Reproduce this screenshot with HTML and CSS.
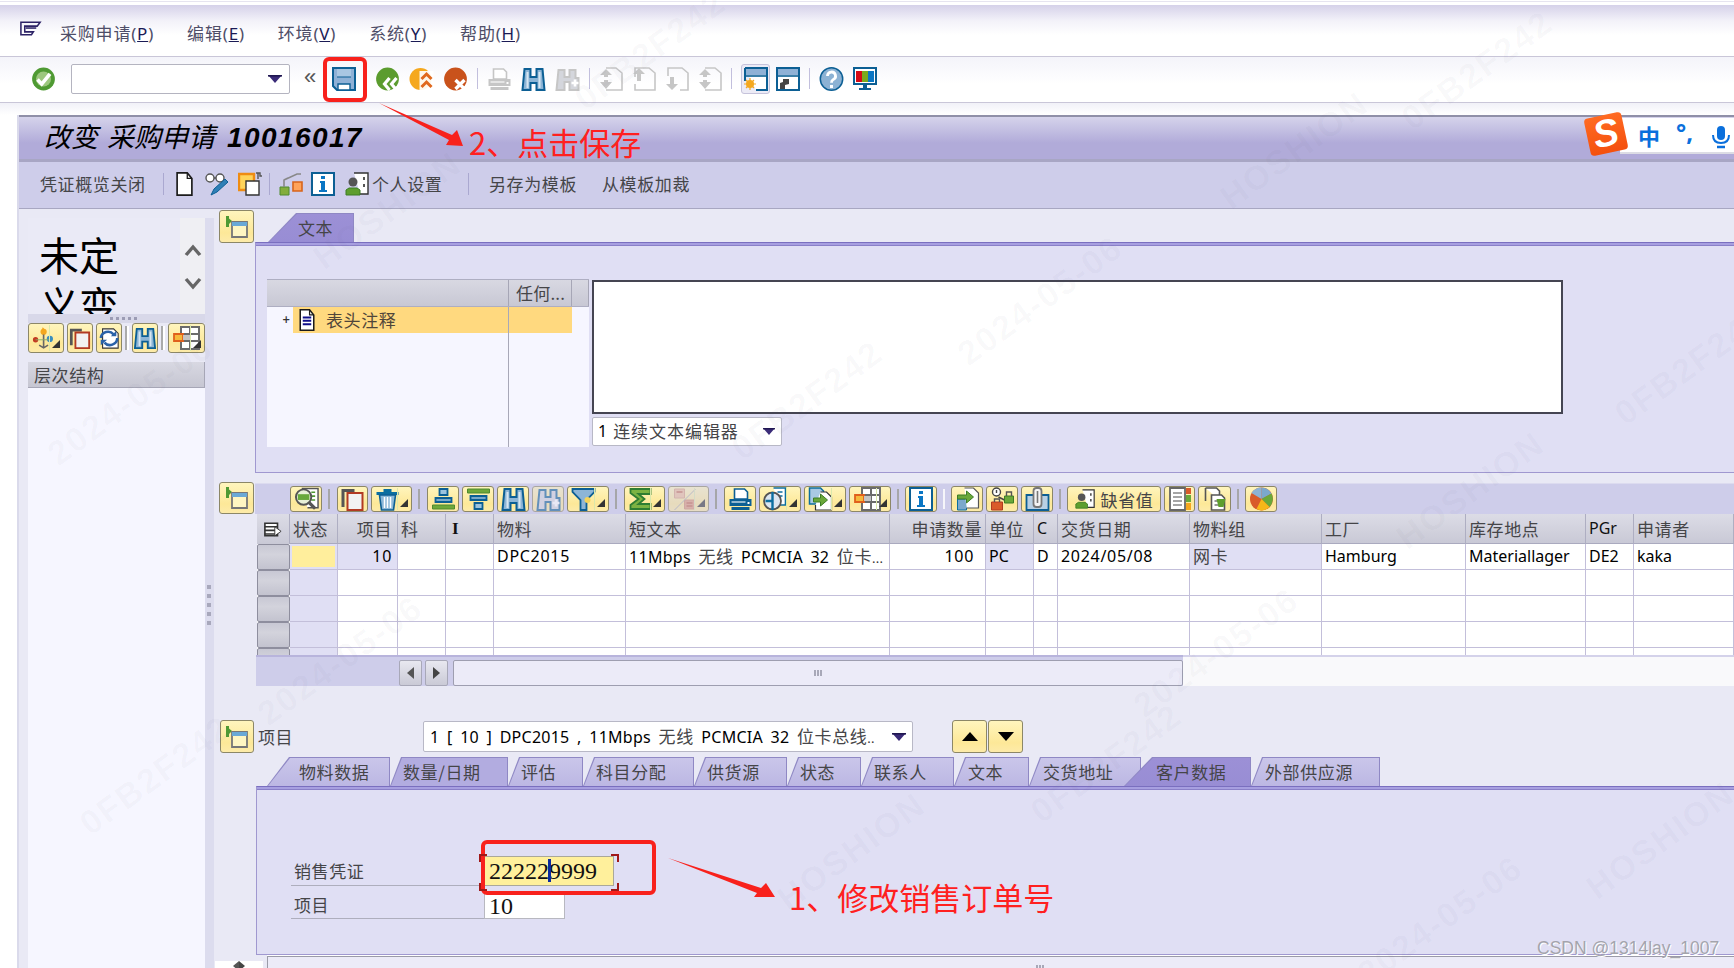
FILE: index.html
```html
<!DOCTYPE html>
<html lang="zh">
<head>
<meta charset="utf-8">
<title>改变 采购申请 10016017</title>
<link rel="stylesheet" href="styles.css">
</head>
<body>
<svg class="defs" aria-hidden="true">
  <symbol id="i-menu" viewBox="0 0 24 16"><path d="M2 1h20l-3 4H6v6h9l-2 3H2z" fill="none" stroke="#2c2266" stroke-width="1.6"/><path d="M7 7h11" stroke="#2c2266" stroke-width="1.6"/></symbol>
  <symbol id="i-ok" viewBox="0 0 24 24"><circle cx="12" cy="12" r="11.4" fill="#4f9a33"/><circle cx="12" cy="12" r="7.5" fill="#9cc77e"/><path d="M6 12.5l4.2 4.6L18.5 6.8" fill="none" stroke="#fff" stroke-width="3.6"/></symbol>
  <symbol id="i-save" viewBox="0 0 24 24"><path d="M1 1h22v22H5l-4-4z" fill="#8fb1d6" stroke="#0c5f94" stroke-width="2"/><path d="M5 2h14v8H5z" fill="#a9c6e2"/><path d="M5 10h14" stroke="#0c5f94" stroke-width="1"/><path d="M6 17h12v6H6z" fill="#fff" stroke="#0c5f94" stroke-width="1.4"/></symbol>
  <symbol id="i-back" viewBox="0 0 24 24"><circle cx="12" cy="12" r="11.4" fill="#5b9c2e"/><path d="M14 11l-5 6 5 6M21 11l-5 6 5 6" fill="none" stroke="#fff" stroke-width="3.2"/></symbol>
  <symbol id="i-exit" viewBox="0 0 24 24"><circle cx="11" cy="12" r="11" fill="#f5a81e"/><path d="M10 4h14v20H10z" fill="#fff" opacity=".9"/><path d="M12 12l5-5 5 5M12 20l5-5 5 5" fill="none" stroke="#e0681c" stroke-width="3"/></symbol>
  <symbol id="i-cancel" viewBox="0 0 24 24"><circle cx="12" cy="12" r="11.4" fill="#c9521b"/><path d="M12 13l9 9M21 13l-9 9" stroke="#fff" stroke-width="3.4"/></symbol>
  <symbol id="i-print" viewBox="0 0 24 24"><path d="M6 2h10l3 3v7H6z" fill="#fff" stroke="currentColor" stroke-width="1.6"/><path d="M1 12h22v7H1z" fill="currentColor"/><path d="M3 14h14v2H3z" fill="#fff" opacity=".55"/><path d="M19 15h2v2h-2z" fill="#fff"/><path d="M3 20h18v3H3z" fill="currentColor"/></symbol>
  <symbol id="i-find" viewBox="0 0 24 24"><path d="M3 2h6v8h6V2h6l2 21h-8v-7H9v7H1z" fill="#8db5d6" stroke="currentColor" stroke-width="2"/><path d="M6 5v16M18 5v16" stroke="#d6e6f2" stroke-width="2"/></symbol>
  <symbol id="i-findn" viewBox="0 0 24 24"><path d="M3 3h6v7h5V3h6v8h3v12h-9v-8H9v8H1z" fill="#d4d6dc" stroke="currentColor" stroke-width="2"/><path d="M16 16h7M19.5 12.500v7" stroke="#fff" stroke-width="2.600"/></symbol>
  <symbol id="i-first" viewBox="0 0 24 24"><path d="M7 1h10l6 5v17H7" fill="none" stroke="currentColor" stroke-width="1.600"/><path d="M7 2l6 6H9v2H5V8H1zM1 15h4v-2h4v2h4l-6 7z" fill="currentColor"/></symbol>
  <symbol id="i-prev" viewBox="0 0 24 24"><path d="M3 10V1h14l6 5v17H3v-6" fill="none" stroke="currentColor" stroke-width="1.600"/><path d="M7 1l6 6H9v7H5V7H1z" fill="currentColor"/></symbol>
  <symbol id="i-next" viewBox="0 0 24 24"><path d="M3 9V1h14l6 5v17H15" fill="none" stroke="currentColor" stroke-width="1.600"/><path d="M5 10h4v7h4l-6 6-6-6h4z" fill="currentColor"/></symbol>
  <symbol id="i-win1" viewBox="0 0 24 24"><path d="M1 1h22v22H12" fill="#fff" stroke="#0c5f94" stroke-width="2"/><path d="M1 14V1" stroke="#0c5f94" stroke-width="2"/><path d="M2 2h20v6H2z" fill="#8fb1d6"/><path d="M2 9h20" stroke="#0c5f94" stroke-width="1.600"/><circle cx="6" cy="17" r="4" fill="#f5a81e"/><path d="M6 11v12M0 17h12M2 13l8 8M10 13l-8 8" stroke="#f5a81e" stroke-width="1.200"/></symbol>
  <symbol id="i-win2" viewBox="0 0 24 24"><path d="M1 1h22v22H1z" fill="#fff" stroke="#0c5f94" stroke-width="2"/><path d="M2 2h20v6H2z" fill="#8fb1d6"/><path d="M2 9h20" stroke="#0c5f94" stroke-width="1.600"/><path d="M4 22v-6l3-1v-3h6v5l-4 1v4z" fill="#444"/></symbol>
  <symbol id="i-help" viewBox="0 0 24 24"><circle cx="12" cy="12" r="11.200" fill="#8cb2d4" stroke="#0c5f94" stroke-width="1.500"/><path d="M8 9a4 4 0 1 1 5.500 3.700c-1 .5-1.500 1.200-1.500 3" fill="none" stroke="#fff" stroke-width="2.800"/><path d="M10.500 18h3v3h-3z" fill="#fff"/></symbol>
  <symbol id="i-monitor" viewBox="0 0 24 24"><path d="M1 1h22v16H1z" fill="#fff" stroke="#0c5f94" stroke-width="2"/><path d="M3 4h6v11H3z" fill="#d40a16"/><path d="M9 4h6v11H9z" fill="#7aaa1e"/><path d="M15 4h6v11h-6z" fill="#0a76c4"/><path d="M10 18h4v3h-4zM6 21h12v2H6z" fill="#0c5f94"/></symbol>
  <symbol id="i-doc" viewBox="0 0 20 26"><path d="M2 1h11l5 6v18H2z" fill="#fff" stroke="#1b1b1b" stroke-width="1.800"/><path d="M13 1v6h5" fill="none" stroke="#1b1b1b" stroke-width="1.400"/></symbol>
  <symbol id="i-glasses" viewBox="0 0 24 24"><circle cx="5" cy="6" r="4" fill="#fff" stroke="#555" stroke-width="1.400"/><circle cx="15" cy="6" r="4" fill="#fff" stroke="#555" stroke-width="1.400"/><path d="M9 6h2" stroke="#555" stroke-width="1.400"/><path d="M6 23l3-6L20 7l3 3-11 10z" fill="#2f7fb6" stroke="#0c5f94"/></symbol>
  <symbol id="i-copyset" viewBox="0 0 24 24"><path d="M1 2h15v16H1z" fill="#ffd45a" stroke="#ef8c12" stroke-width="2.400"/><path d="M8 9h13v14H8z" fill="#fff" stroke="#333" stroke-width="1.400"/><path d="M18 1h4v3h2M20 1v6" fill="none" stroke="#555" stroke-width="1.400"/></symbol>
  <symbol id="i-hier" viewBox="0 0 24 24"><path d="M1 15h9v8H1z" fill="#83ad3c" stroke="#4f8a2e"/><path d="M14 10h9v9h-9z" fill="#ffa35a" stroke="#d8641c" stroke-width="1.600"/><path d="M5 15V8l13-6h4M5 8l4-2" fill="none" stroke="#888" stroke-width="1.600"/></symbol>
  <symbol id="i-info" viewBox="0 0 24 24"><path d="M1 1h22v22H1z" fill="#fff" stroke="#0c5f94" stroke-width="2"/><path d="M10 4h4v3h-4zM9 9h5v9h2v2H8v-2h2v-7H9z" fill="#0a76c4"/></symbol>
  <symbol id="i-person" viewBox="0 0 24 24"><path d="M9 1h14v21H15" fill="#fff" stroke="#333" stroke-width="1.400"/><circle cx="8" cy="10" r="4.500" fill="#555"/><path d="M1 23v-5l3-2h8l3 2v5z" fill="#5e9e2e" stroke="#3c7d25"/><path d="M18 5h2v3h-2zM18 12h2v3h-2z" fill="#555"/></symbol>
  <symbol id="i-sec" viewBox="0 0 24 24"><path d="M1 1l6 5-6 6z" fill="#4f9a33"/><path d="M1 1h3v11H1z" fill="#4f9a33"/><path d="M7 7h15v15H7z" fill="#fff6c2" stroke="#777" stroke-width="1.800"/><path d="M7 7h15v4H7z" fill="#6aa9d6"/></symbol>
  <symbol id="i-anchor" viewBox="0 0 28 26"><path d="M12 1l3 3-1 5h-2l-1-5z" fill="#f4a71e"/><circle cx="13" cy="6" r="3.500" fill="#f4a71e"/><path d="M13 9v14M8 21l5 3 5-3" fill="none" stroke="#666" stroke-width="1.800"/><circle cx="4" cy="15" r="3" fill="#c23b22"/><circle cx="20" cy="14" r="3.500" fill="#3a8dbe"/><path d="M4 15h16" stroke="#8a6" stroke-width="1"/></symbol>
  <symbol id="i-copyrow" viewBox="0 0 24 24"><path d="M1 2h13v3H4v15H1z" fill="#555"/><path d="M7 6h15v17H7z" fill="#f2f2f2" stroke="#b23a22" stroke-width="2"/></symbol>
  <symbol id="i-sync" viewBox="0 0 24 24"><path d="M5 2h12l5 5v16H5z" fill="#fff" stroke="#333" stroke-width="1.200"/><path d="M3 12a8 8 0 0 1 14-4M21 12a8 8 0 0 1-14 5" fill="none" stroke="#2a62a8" stroke-width="2.800"/><path d="M14 10h6V4zM10 14H3v6z" fill="#2a62a8"/></symbol>
  <symbol id="i-layout" viewBox="0 0 32 24"><path d="M9 1h18v22H9z" fill="#fff" stroke="#6b6b6b" stroke-width="2"/><path d="M9 8h18M9 15h18M18 1v22" stroke="#6b6b6b" stroke-width="2"/><path d="M2 8h9v7H2z" fill="#f5b93c" stroke="#e0601c" stroke-width="1.800"/><path d="M11 9h7v5h-7z" fill="#c4c4c4"/></symbol>
  <symbol id="i-detail" viewBox="0 0 26 24"><path d="M8 1h17v20H14" fill="#fff" stroke="#555" stroke-width="1.500"/><path d="M18 5h4M18 9h4M18 13h4" stroke="#4f9a33" stroke-width="1.600"/><circle cx="10" cy="10" r="8" fill="#e8f0d8" stroke="#555" stroke-width="2"/><path d="M4 7h12v6H4z" fill="#68a83c"/><path d="M15 15l7 7" stroke="#555" stroke-width="3.400"/></symbol>
  <symbol id="i-trash" viewBox="0 0 24 24"><path d="M1 5h22v3H1zM8 2h8v3H8z" fill="#0c6ea0"/><path d="M4 8h16l-2 15H6z" fill="#8cb8d8" stroke="#0c5f94" stroke-width="1.600"/><path d="M9 10v11M12 10v11M15 10v11" stroke="#fff" stroke-width="1.500"/></symbol>
  <symbol id="i-sortup" viewBox="0 0 24 24"><path d="M8 2h8v6H8z" fill="#9cc3de" stroke="#0c5f94" stroke-width="1.800"/><path d="M4 11h16v4H4z" fill="#79a8c9" stroke="#0c5f94" stroke-width="1.800"/><path d="M1 18h22v4H1z" fill="#6fa83a" stroke="#4f8a2e"/></symbol>
  <symbol id="i-sortdown" viewBox="0 0 24 24"><path d="M1 2h22v4H1z" fill="#6fa83a" stroke="#4f8a2e"/><path d="M4 9h16v4H4z" fill="#79a8c9" stroke="#0c5f94" stroke-width="1.800"/><path d="M8 16h8v6H8z" fill="#9cc3de" stroke="#0c5f94" stroke-width="1.800"/></symbol>
  <symbol id="i-filter" viewBox="0 0 24 24"><path d="M1 2h22v3l-8 8v10h-6V13L1 5z" fill="#8db5d6" stroke="#0c5f94" stroke-width="1.800"/><circle cx="16" cy="13" r="3" fill="#f4d35a"/></symbol>
  <symbol id="i-sum" viewBox="0 0 24 24"><path d="M2 2h20v5H10l6 5-6 5h12v5H2v-4l8-6-8-6z" fill="#7cb342" stroke="#2e7d32" stroke-width="1.800"/></symbol>
  <symbol id="i-subtotal" viewBox="0 0 24 24"><path d="M2 2h10v9H2z" fill="#f0bf9a" stroke="#d8a080"/><path d="M12 13h10v9H12z" fill="#e09a78" stroke="#d08a68"/><path d="M4 5h6M14 16h6M14 19h6" stroke="#c0664a" stroke-width="1.400"/><path d="M2 23L23 2" stroke="#aaa"/></symbol>
  <symbol id="i-views" viewBox="0 0 24 24"><path d="M10 1h12v17H16" fill="#fff" stroke="#0c6ea0" stroke-width="1.600"/><path d="M14 5h5M14 9h5" stroke="#0c6ea0" stroke-width="1.600"/><circle cx="9" cy="14" r="8.500" fill="#dce6f0" stroke="#555" stroke-width="1.800"/><path d="M9 5v18M2 14h7" stroke="#0c6ea0" stroke-width="2.400"/></symbol>
  <symbol id="i-export" viewBox="0 0 24 24"><path d="M1 1h11l3 3v13H1z" fill="#a9c9e2" stroke="#0c6ea0" stroke-width="1.500"/><path d="M12 5h6l5 5v13H7v-5" fill="#fff" stroke="#333" stroke-width="1.200"/><path d="M5 11h7V7l7 6-7 6v-4H5z" fill="#6aa83a" stroke="#3c7d25"/></symbol>
  <symbol id="i-import" viewBox="0 0 24 24"><path d="M2 12h9v11H2z" fill="#7ba8cc" stroke="#0c6ea0"/><path d="M9 1h9l5 5v15H11" fill="#fff" stroke="#555" stroke-width="1.200"/><path d="M2 8h9V4l7 6-7 6v-4H2z" fill="#6aa83a" stroke="#3c7d25"/></symbol>
  <symbol id="i-lock" viewBox="0 0 24 24"><circle cx="6" cy="5" r="4" fill="#fff" stroke="#444" stroke-width="1.400"/><path d="M6 3v3M8 10l8 4" stroke="#444" stroke-width="1.400"/><path d="M1 15h11v8H1z" fill="#d95b2a" stroke="#b23a22"/><path d="M14 9h9v7h-9z" fill="#6aa83a" stroke="#3c7d25"/><path d="M4 15v-3h5v3M16 9V5h5v4" fill="none" stroke="#555" stroke-width="1.400"/></symbol>
  <symbol id="i-clip" viewBox="0 0 24 24"><path d="M1 8h22v15H1z" fill="#b8d0e4" stroke="#0c5f94" stroke-width="1.800"/><path d="M8 13V4a3 3 0 0 1 3-3h2a3 3 0 0 1 3 3v13a3 3 0 0 1-3 3h-2a3 3 0 0 1-3-3z" fill="#f4f4f4" stroke="#777" stroke-width="1.800"/><path d="M12 4v12" stroke="#777" stroke-width="1.600"/></symbol>
  <symbol id="i-list" viewBox="0 0 24 24"><path d="M2 1h15v22H2z" fill="#fff" stroke="#666" stroke-width="1.800"/><path d="M5 6h9M5 10h9M5 14h9M5 18h9" stroke="#888" stroke-width="1.600"/><path d="M18 1h5v6h-5z" fill="#d95b2a"/><path d="M18 8h5v7h-5z" fill="#6aa83a"/><path d="M18 16h5v7h-5z" fill="#f4a71e"/></symbol>
  <symbol id="i-docgreen" viewBox="0 0 24 24"><path d="M3 1h11l3 3v9" fill="#fff" stroke="#555" stroke-width="1.600"/><path d="M3 1v13" stroke="#555" stroke-width="1.600"/><path d="M9 8h10l3 3v12H9z" fill="#fff" stroke="#555" stroke-width="1.600"/><path d="M12 14h6M12 18h6" stroke="#777" stroke-width="1.500"/><path d="M14 12h9l-2 8h-5z" fill="#5e9e2e"/></symbol>
  <symbol id="i-pie" viewBox="0 0 24 24"><circle cx="12" cy="12" r="11.500" fill="#d95b2a"/><path d="M12 12V.5A11.500 11.500 0 0 1 22 6.500z" fill="#7ba8cc"/><path d="M12 12L22 6.500A11.500 11.500 0 0 1 20 20z" fill="#6aa83a"/><path d="M12 12l8 8a11.500 11.500 0 0 1-13 2z" fill="#f7b718"/><path d="M12 12V.5A11.500 11.500 0 0 0 2 6z" fill="#8cb2d4"/></symbol>
  <symbol id="i-header" viewBox="0 0 20 16"><path d="M1 1h14v14H1z" fill="#fff" stroke="#333" stroke-width="1.800"/><path d="M1 5h14M1 9h14M1 13h14" stroke="#333" stroke-width="1.800"/><path d="M12 5l7 5-7 5z" fill="#fff" stroke="#333"/></symbol>
  <symbol id="i-caret" viewBox="0 0 14 8"><path d="M0 0h14L7 8z" fill="#3a2b78"/><path d="M0 0h14v1.600H0z" fill="#1f1650"/></symbol>
  <symbol id="i-mic" viewBox="0 0 18 24"><rect x="5" y="1" width="8" height="14" rx="4" fill="#0a6fdc"/><path d="M1 10c0 5 3 8 8 8s8-3 8-8" fill="none" stroke="#0a6fdc" stroke-width="2"/><path d="M5 22h8" stroke="#0a6fdc" stroke-width="2.500"/></symbol>
</svg>

<div class="app">
  <div class="topgap"></div>
  <nav class="menubar">
    <svg class="menu-ico"><use href="#i-menu"/></svg>
    <div class="menu-items">
      <span class="mi">采购申请<span class="mk">(<u>P</u>)</span></span>
      <span class="mi">编辑<span class="mk">(<u>E</u>)</span></span>
      <span class="mi">环境<span class="mk">(<u>V</u>)</span></span>
      <span class="mi">系统<span class="mk">(<u>Y</u>)</span></span>
      <span class="mi">帮助<span class="mk">(<u>H</u>)</span></span>
    </div>
  </nav>
  <div class="systool">
    <svg class="ic ok"><use href="#i-ok"/></svg>
    <div class="cmd"><svg class="caret"><use href="#i-caret"/></svg></div>
    <span class="chev">«</span>
    <svg class="ic save"><use href="#i-save"/></svg>
    <div class="sysgroup">
      <svg class="ic"><use href="#i-back"/></svg>
      <svg class="ic"><use href="#i-exit"/></svg>
      <svg class="ic"><use href="#i-cancel"/></svg>
    </div>
    <i class="syssep"></i>
    <div class="sysgroup dim">
      <svg class="ic"><use href="#i-print"/></svg>
      <svg class="ic blue"><use href="#i-find"/></svg>
      <svg class="ic"><use href="#i-findn"/></svg>
    </div>
    <i class="syssep"></i>
    <div class="sysgroup dim">
      <svg class="ic ic24"><use href="#i-first"/></svg>
      <svg class="ic ic24"><use href="#i-prev"/></svg>
      <svg class="ic ic24"><use href="#i-next"/></svg>
      <svg class="ic ic24"><use href="#i-first"/></svg>
    </div>
    <i class="syssep"></i>
    <div class="wingroup">
      <span class="winbtn"><svg class="ic ic24"><use href="#i-win1"/></svg></span>
      <svg class="ic ic24"><use href="#i-win2"/></svg>
    </div>
    <i class="syssep"></i>
    <svg class="ic"><use href="#i-help"/></svg>
    <svg class="ic ic24"><use href="#i-monitor"/></svg>
  </div>
  <div class="titlegap"></div>

  <div class="shell">
    <header class="titlebar">
      <h1 class="title"><span class="title-zh">改变 采购申请</span> <span class="title-no">10016017</span></h1>
    </header>
    <div class="apptool">
      <span class="zh at-first">凭证概览关闭</span>
      <i class="tsep at-s1"></i>
      <svg class="ic ic-doc at-doc"><use href="#i-doc"/></svg>
      <svg class="ic ic24 at-glass"><use href="#i-glasses"/></svg>
      <svg class="ic ic24 at-copy"><use href="#i-copyset"/></svg>
      <i class="tsep at-s2"></i>
      <svg class="ic ic24 at-hier"><use href="#i-hier"/></svg>
      <svg class="ic ic24 at-info"><use href="#i-info"/></svg>
      <svg class="ic ic24 at-person"><use href="#i-person"/></svg>
      <span class="zh at-pers">个人设置</span>
      <i class="tsep at-s3"></i>
      <span class="zh at-tpl">另存为模板</span>
      <span class="zh at-load">从模板加裁</span>
    </div>

    <div class="main">
      <aside class="side">
        <div class="side-col">
          <div class="side-top">
            <div class="big">未定<br>义变</div>
            <div class="side-scroll">
              <svg class="chevron" viewBox="0 0 18 14"><path d="M2 12l7-8 7 8" fill="none" stroke="#666" stroke-width="3.400"/></svg>
              <svg class="chevron" viewBox="0 0 18 14"><path d="M2 2l7 8 7-8" fill="none" stroke="#666" stroke-width="3.400"/></svg>
            </div>
          </div>
          <div class="side-band"><span class="dots"></span></div>
          <div class="side-tools">
            <span class="btn sb1 drop"><svg class="ic"><use href="#i-anchor"/></svg></span>
            <span class="btn sb2"><svg class="ic ic-s"><use href="#i-copyrow"/></svg></span>
            <span class="btn sb2"><svg class="ic ic-s"><use href="#i-sync"/></svg></span>
            <i class="vsep"></i>
            <span class="btn sb2"><svg class="ic ic-s blue"><use href="#i-find"/></svg></span>
            <i class="vsep"></i>
            <span class="btn sb5 drop"><svg class="ic ic-l"><use href="#i-layout"/></svg></span>
          </div>
          <div class="side-head zh">层次结构</div>
          <div class="side-list"></div>
        </div>
        <div class="side-strip"></div>
      </aside>
      <div class="split"><span class="splitdots"></span></div>

      <div class="content">
        <section class="sec sec-a">
          <span class="btn secbtn"><svg class="ic"><use href="#i-sec"/></svg></span>
          <div class="sec-main sec-a-main">
            <div class="tabs tabs-a"><span class="tab tab-big active zh t-text">文本</span></div>
            <div class="panel panel-a">
              <div class="tree">
                <div class="tree-head">
                  <span class="th th1"></span>
                  <span class="th th2 zh">任何...</span>
                  <span class="th th3"></span>
                </div>
                <div class="tree-body">
                  <span class="plus">+</span>
                  <div class="tree-sel">
                    <svg class="tree-doc" viewBox="0 0 20 26"><use href="#i-doc"/><path d="M5 10h10M5 14h10M5 18h10" stroke="#0f0f8a" stroke-width="2.400"/></svg>
                    <span class="zh">表头注释</span>
                  </div>
                </div>
              </div>
              <div class="editor">
                <div class="textarea"></div>
                <div class="dd dd-a"><span class="num">1</span><span class="zh">连续文本编辑器</span><svg class="caret"><use href="#i-caret"/></svg></div>
              </div>
            </div>
          </div>
        </section>

        <section class="sec sec-b">
          <span class="btn secbtn secbtn-b"><svg class="ic"><use href="#i-sec"/></svg></span>
          <div class="sec-main sec-b-main">
            <div class="gridtool">
              <span class="btn w32"><svg class="ic"><use href="#i-detail"/></svg></span>
              <i class="gsep g9"></i>
              <span class="btn w31"><svg class="ic"><use href="#i-copyrow"/></svg></span>
              <span class="btn w41 drop"><svg class="ic blue"><use href="#i-trash"/></svg></span>
              <i class="gsep g9"></i>
              <span class="btn w32"><svg class="ic"><use href="#i-sortup"/></svg></span>
              <span class="btn w32"><svg class="ic"><use href="#i-sortdown"/></svg></span>
              <span class="btn w32"><svg class="ic blue"><use href="#i-find"/></svg></span>
              <span class="btn w32 faded"><svg class="ic blue"><use href="#i-findn"/></svg></span>
              <span class="btn w42 drop"><svg class="ic"><use href="#i-filter"/></svg></span>
              <i class="gsep g9"></i>
              <span class="btn w41 drop"><svg class="ic"><use href="#i-sum"/></svg></span>
              <span class="btn w41 drop faded"><svg class="ic"><use href="#i-subtotal"/></svg></span>
              <i class="gsep g9"></i>
              <span class="btn w32"><svg class="ic blue"><use href="#i-print"/></svg></span>
              <span class="btn w42 drop"><svg class="ic"><use href="#i-views"/></svg></span>
              <span class="btn w42 drop"><svg class="ic"><use href="#i-export"/></svg></span>
              <span class="btn w42 drop"><svg class="ic ic-l"><use href="#i-layout"/></svg></span>
              <i class="gsep"></i>
              <span class="btn w32"><svg class="ic ic24"><use href="#i-info"/></svg></span>
              <i class="gsep white"></i>
              <span class="btn w32"><svg class="ic"><use href="#i-import"/></svg></span>
              <span class="btn w32"><svg class="ic"><use href="#i-lock"/></svg></span>
              <span class="btn w32"><svg class="ic"><use href="#i-clip"/></svg></span>
              <i class="gsep"></i>
              <span class="btn w94"><svg class="ic ic24"><use href="#i-person"/></svg><span class="zh">缺省值</span></span>
              <span class="btn w31"><svg class="ic ic24"><use href="#i-list"/></svg></span>
              <span class="btn w33"><svg class="ic"><use href="#i-docgreen"/></svg></span>
              <i class="gsep"></i>
              <span class="btn w32"><svg class="ic"><use href="#i-pie"/></svg></span>
            </div>
            <div class="table">
              <div class="tr thead">
                <div class="c rh"><svg class="hd-ico"><use href="#i-header"/></svg></div>
                <div class="c zh">状态</div><div class="c zh r">项目</div><div class="c zh">科</div><div class="c lat ibar">I</div><div class="c zh">物料</div><div class="c zh">短文本</div><div class="c zh r r2">申请数量</div><div class="c zh">单位</div><div class="c lat">C</div><div class="c zh">交货日期</div><div class="c zh">物料组</div><div class="c zh">工厂</div><div class="c zh">库存地点</div><div class="c lat">PGr</div><div class="c zh">申请者</div>
              </div>
              <div class="tr">
                <div class="c rh"></div>
                <div class="c st-y"></div><div class="c lat r r3 ro dg">10</div><div class="c"></div><div class="c"></div><div class="c lat dg">DPC2015</div><div class="c lat st">11Mbps <span class="zh">无线</span> PCMCIA 32 <span class="zh">位卡</span><span class="ell">...</span></div><div class="c lat r r4 dg">100</div><div class="c lat ro">PC</div><div class="c lat">D</div><div class="c lat dg">2024/05/08</div><div class="c zh ro">网卡</div><div class="c lat">Hamburg</div><div class="c lat">Materiallager</div><div class="c lat">DE2</div><div class="c lat">kaka</div>
              </div>
              <div class="tr"><div class="c rh"></div><div class="c ro"></div><div class="c"></div><div class="c"></div><div class="c"></div><div class="c"></div><div class="c"></div><div class="c"></div><div class="c"></div><div class="c"></div><div class="c"></div><div class="c"></div><div class="c"></div><div class="c"></div><div class="c"></div><div class="c"></div></div>
              <div class="tr"><div class="c rh"></div><div class="c ro"></div><div class="c"></div><div class="c"></div><div class="c"></div><div class="c"></div><div class="c"></div><div class="c"></div><div class="c"></div><div class="c"></div><div class="c"></div><div class="c"></div><div class="c"></div><div class="c"></div><div class="c"></div><div class="c"></div></div>
              <div class="tr"><div class="c rh"></div><div class="c ro"></div><div class="c"></div><div class="c"></div><div class="c"></div><div class="c"></div><div class="c"></div><div class="c"></div><div class="c"></div><div class="c"></div><div class="c"></div><div class="c"></div><div class="c"></div><div class="c"></div><div class="c"></div><div class="c"></div></div>
              <div class="tr"><div class="c rh"></div><div class="c ro"></div><div class="c"></div><div class="c"></div><div class="c"></div><div class="c"></div><div class="c"></div><div class="c"></div><div class="c"></div><div class="c"></div><div class="c"></div><div class="c"></div><div class="c"></div><div class="c"></div><div class="c"></div><div class="c"></div></div>
            </div>
            <div class="hscroll">
              <div class="hs-left"></div>
              <span class="hs-btn"><i class="tri-l"></i></span>
              <span class="hs-btn"><i class="tri-r"></i></span>
              <div class="hs-thumb"><span class="grip"></span></div>
              <div class="hs-rest"></div>
            </div>
          </div>
        </section>

        <section class="sec-c">
          <div class="item-head">
            <span class="btn secbtn secbtn-c"><svg class="ic"><use href="#i-sec"/></svg></span>
            <span class="zh item-label">项目</span>
            <div class="dd dd-c"><span class="lat">1 [ 10 ] DPC2015 , 11Mbps <span class="zh">无线</span> PCMCIA 32 <span class="zh">位卡总线</span><span class="ell">..</span></span><svg class="caret"><use href="#i-caret"/></svg></div>
            <span class="btn arrbtn first"><i class="tri-up"></i></span>
            <span class="btn arrbtn"><i class="tri-dn"></i></span>
          </div>
          <div class="tabs tabs-c">
            <span class="tab zh t1">物料数据</span>
            <span class="tab zh t2 hi">数量/日期</span>
            <span class="tab zh t3">评估</span>
            <span class="tab zh t4">科目分配</span>
            <span class="tab zh t5">供货源</span>
            <span class="tab zh t6">状态</span>
            <span class="tab zh t7">联系人</span>
            <span class="tab zh t8">文本</span>
            <span class="tab zh t9">交货地址</span>
            <span class="tab tab-big active zh t10">客户数据</span>
            <span class="tab zh t11">外部供应源</span>
          </div>
          <div class="panel panel-c">
            <div class="form-row row1"><span class="zh flabel">销售凭证</span><div class="input focus">222229999<i class="cursor"></i></div></div>
            <div class="form-row row2"><span class="zh flabel">项目</span><div class="input small">10</div></div>
          </div>
          <div class="botscroll">
            <span class="bs-btn"><i class="tri-l small"></i></span>
            <span class="bs-btn"><i class="tri-r small"></i></span>
            <div class="bs-thumb"><span class="grip"></span></div>
          </div>
        </section>
      </div>
    </div>
  </div>

  <!-- Sogou input method status bar floats over the window -->
  <div class="ime">
    <span class="ime-s">S</span>
    <span class="ime-zh">中</span>
    <span class="ime-punct">°,</span>
    <svg class="ime-mic"><use href="#i-mic"/></svg>
  </div>

  <!-- Faint document watermark -->
  <div class="wm" aria-hidden="true">
    <span class="w w1">HOSHION</span><span class="w w2">0FB2F242</span><span class="w w3">2024-05-06</span><span class="w w4">0FB2F242</span><span class="w w5">HOSHION</span><span class="w w6">0FB2F242</span><span class="w w7">2024-05-06</span><span class="w w8">HOSHION</span><span class="w w9">0FB2F242</span><span class="w w10">2024-05-06</span><span class="w w11">HOSHION</span><span class="w w12">2024-05-06</span><span class="w w13">0FB2F242</span><span class="w w14">HOSHION</span><span class="w w15">0FB2F242</span><span class="w w16">2024-05-06</span>
  </div>

  <!-- Hand-drawn annotations over the screenshot -->
  <div class="mark mark-save"></div>
  <div class="mark mark-input"></div>
  <i class="br br-tl"></i><i class="br br-tr"></i><i class="br br-bl"></i><i class="br br-br"></i>
  <svg class="arrows" viewBox="0 0 1734 968">
    <path d="M379 103L452 135 457 130 463 146 446 145 449 140z" fill="#f8211c"/>
    <path d="M668 858L761 888 766 883 775 897 754 897 757 893z" fill="#f8211c"/>
  </svg>
  <div class="redtext rt2">2、点击保存</div>
  <div class="redtext rt1">1、修改销售订单号</div>
  <div class="csdn">CSDN @1314lay_1007</div>
</div>
</body>
</html>
```

FILE: styles.css
```css
* { box-sizing: border-box; }
html, body { margin: 0; padding: 0; background: #fff; }
body { font-family: "Noto Sans", "Noto Sans CJK SC", sans-serif; color: #111; }
.defs { position: absolute; width: 0; height: 0; }
.app { position: relative; width: 1734px; height: 968px; overflow: hidden; background: #fff; }

.zh { font-family: "Noto Sans CJK SC", "Noto Sans", sans-serif; font-size: 17px; letter-spacing: .6px; color: #454548; white-space: nowrap; }
.lat { font-family: "Noto Sans", "Noto Sans CJK SC", sans-serif; font-size: 16px; color: #000; white-space: nowrap; }
.dg { letter-spacing: .7px; }
.st { word-spacing: 3px; letter-spacing: .3px; }
.ell { font-size: 13px; color: #333; }

.ic { width: 25px; height: 24px; flex: none; display: block; }
.ic24 { width: 24px; }
.ic-s { width: 22px; height: 22px; }
.ic-l { width: 32px; height: 24px; }
.ic-doc { width: 19px; }
.blue { color: #0c5f94; }
.dim { color: #c6c6c6; }
.dim .blue { color: #0c5f94; }

/* Top bars */
.topgap { height: 5px; background: linear-gradient(#fff 0, #fff 1px, #e6e4f0 1px, #e6e4f0 2px, #fff 2px); }
.menubar { height: 52px; display: flex; align-items: center; border-bottom: 1px solid #c9c6d8; background: linear-gradient(#d5d1e9 0, #f3f2f9 16px, #fff 30px); position: relative; }
.menu-ico { width: 23px; height: 16px; margin-left: 19px; margin-top: -4px; flex: none; }
.menu-items { display: flex; gap: 33px; margin-left: 18px; margin-top: 3px; }
.mi { font-family: "Noto Sans CJK SC", sans-serif; font-size: 17px; letter-spacing: .8px; color: #4f4e68; }
.mk { font-family: "Noto Sans", sans-serif; letter-spacing: .8px; }
.mk u { color: #1a1a55; }

.systool { height: 46px; display: flex; align-items: center; gap: 9px; padding: 0 0 2px 31px; border-bottom: 1px solid #c9c6d8; background: linear-gradient(#f4f4fa, #fff 60%); }
.ok { margin-right: 6px; }
.cmd { width: 219px; height: 30px; margin-right: 5px; background: #fff; border: 1px solid #b4b4c0; border-radius: 2px; position: relative; display: flex; align-items: center; justify-content: flex-end; padding-right: 7px; }
.caret { width: 14px; height: 8px; flex: none; }
.chev { font: 22px/1 "Liberation Sans", sans-serif; width: 14px; color: #555; margin-right: 5px; margin-top: -3px; }
.save { margin-right: 10px; width: 24px; }
.sysgroup { display: flex; gap: 9px; }
.syssep { width: 1px; height: 21px; background: #c2bfdd; flex: none; }
.wingroup { display: flex; gap: 6px; align-items: center; }
.winbtn { width: 29px; height: 30px; border: 1px solid #c6c3db; border-radius: 3px; background: #ecebf6; display: flex; align-items: center; justify-content: center; }

.titlegap { height: 12px; background: linear-gradient(#f1f1f8, #fff); }

/* Shell */
.shell { margin-left: 17px; border-left: 2px solid #dadaeb; background: #e9e9f5; }
.titlebar { height: 47px; border-top: 2px solid #8f8fa8; border-bottom: 3px solid #a8a6c4; background: linear-gradient(#d5d3eb 0, #b1abd9 62%, #b1abd9 100%); display: flex; align-items: center; padding-left: 25px; }
.title { margin: -5px 0 0; font-weight: normal; font-style: italic; color: #000; font-size: 0; white-space: nowrap; }
.title-zh { font-family: "Noto Sans CJK SC", sans-serif; font-size: 27px; letter-spacing: 0; word-spacing: 3px; }
.title-no { font-family: "Liberation Sans", sans-serif; font-weight: bold; font-size: 28px; letter-spacing: 1.400px; margin-left: 12px; }

.apptool { height: 47px; display: flex; align-items: center; background: #cecdea; border-bottom: 1px solid #a8a7c2; padding: 0 0 3px 21px; }
.tsep { width: 1px; height: 22px; background: #aaa8d0; flex: none; }
.at-first { width: 106px; }
.at-s1 { margin-left: 17px; }
.at-doc { margin-left: 11px; }
.at-glass { margin-left: 11px; }
.at-copy { margin-left: 9px; }
.at-s2 { margin-left: 7px; }
.at-hier { margin-left: 9px; }
.at-info { margin-left: 8px; }
.at-person { margin-left: 10px; }
.at-pers { margin-left: 3px; width: 70px; }
.at-s3 { margin-left: 26px; }
.at-tpl { margin-left: 20px; width: 88px; }
.at-load { margin-left: 25px; }

.main { display: flex; height: 759px; }

/* Sidebar */
.side { width: 195px; flex: none; display: flex; padding: 9px 0 0 9px; }
.side-col { width: 177px; display: flex; flex-direction: column; }
.side-strip { width: 9px; background: #dcdcee; }
.side-top { display: flex; height: 96px; }
.big { width: 152px; height: 96px; overflow: hidden; padding: 11px 0 0 11px; font: 40px/50px "Noto Sans CJK SC", sans-serif; color: #000; background: #eaeaf6; }
.side-scroll { width: 25px; background: #efeff3; display: flex; flex-direction: column; align-items: center; gap: 20px; padding-top: 25px; }
.chevron { width: 18px; height: 14px; display: block; }
.side-band { height: 9px; background: #d8d8e9; display: flex; justify-content: center; align-items: center; }
.dots, .splitdots, .grip { display: block; }
.dots { width: 28px; height: 3px; background: repeating-linear-gradient(90deg, #9c9cb4 0 3px, transparent 3px 6px); margin-left: 14px; }
.side-tools { height: 30px; display: flex; gap: 3px; }
.sb1 { width: 36px; }
.sb2 { width: 26px; }
.sb5 { width: 37px; }
.vsep { width: 4px; height: 24px; align-self: center; background: linear-gradient(90deg, #aaa 0 2px, #fff 2px); flex: none; }
.side-head { margin-top: 9px; height: 26px; line-height: 25px; padding-left: 6px; background: linear-gradient(#d8d8e2, #c6c6d2); border-bottom: 1px solid #a6a6b6; border-right: 1px solid #a6a6b6; }
.side-list { flex: 1; background: #f6f6ff; }
.split { width: 5px; flex: none; position: relative; }
.splitdots { position: absolute; left: -7px; top: 376px; width: 4px; height: 40px; background: repeating-linear-gradient(#a8a8bc 0 4px, transparent 4px 9px); }

/* Buttons */
.btn { height: 26px; display: inline-flex; align-items: center; justify-content: center; gap: 6px; background: linear-gradient(#fff5bd, #fde898 70%, #fdeba9); border: 1px solid #8c8767; border-radius: 3px; position: relative; flex: none; }
.side-tools .btn { height: 30px; }
.drop { justify-content: flex-start; padding-left: 3px; }
.drop::before { content: ""; position: absolute; right: 13px; top: 1px; bottom: 1px; width: 1px; background: #dbe8ac; }
.drop::after { content: ""; position: absolute; right: 3px; bottom: 4px; border-style: solid; border-width: 0 0 8px 8px; border-color: transparent transparent #333 transparent; }
.faded { opacity: .55; }
.w31 { width: 31px; }
.w32 { width: 32px; }
.w33 { width: 33px; }
.w41 { width: 41px; }
.w42 { width: 42px; }
.w94 { width: 94px; }
.w94 .ic24 { width: 20px; height: 20px; }

/* Right content */
.content { flex: 1; min-width: 0; display: flex; flex-direction: column; padding-top: 1px; }
.sec { display: flex; gap: 1px; }
.secbtn { width: 35px; height: 33px; }
.secbtn .ic { width: 24px; height: 24px; }
.sec-a { height: 263px; }
.sec-main { flex: 1; min-width: 0; }
.sec-a-main { padding-top: 3px; }
.tabs { display: flex; height: 29px; }
.tabs-a { padding-left: 13px; }

.tab { height: 29px; display: flex; align-items: center; padding-left: 13px; padding-bottom: 1px; position: relative; isolation: isolate; background: #8f88c4; --cut: 11px; clip-path: polygon(var(--cut) 0, 100% 0, 100% 100%, 0 100%); }
.tab::before { content: ""; position: absolute; inset: 1px 1px 0 1px; z-index: -1; background: linear-gradient(#cac6ea, #bcb7e3); clip-path: polygon(var(--cut) 0, 100% 0, 100% 100%, 0 100%); }
.tab.hi::before { background: #b2ace0; }
.tab-big { --cut: 28px; }
.tab.active::before { background: linear-gradient(#9c90d6, #988dd4); }
.t-text { width: 86px; padding-left: 30px; }

.panel { background: #e0dff4; border-top: 1px solid #7a6fbf; border-left: 1px solid #a098d0; border-bottom: 1px solid #a098d0; box-shadow: inset 0 2px 0 #a79fe0, inset 0 3px 0 #8a80c8; }
.panel-a { height: 231px; display: flex; padding: 36px 0 0 11px; gap: 3px; }

.tree { width: 322px; height: 168px; background: #f6f6ff; position: relative; }
.tree-head { display: flex; height: 28px; border: 1px solid #aeaec2; border-width: 1px 0 1px 0; }
.th { background: linear-gradient(#d8d8e2, #c8c8d4); height: 26px; line-height: 26px; border-right: 1px solid #a6a6b6; }
.th1 { width: 242px; }
.th2 { width: 63px; padding-left: 7px; letter-spacing: .2px; overflow: hidden; }
.th3 { flex: 1; }
.tree-body { height: 140px; position: relative; padding-left: 26px; background: linear-gradient(90deg, transparent 241px, #a8a8b8 241px 242px, transparent 242px); }
.plus { position: absolute; left: 15px; top: 4px; font: 10px/18px "DejaVu Sans", sans-serif; color: #333; font-weight: bold; }
.tree-sel { width: 279px; height: 26px; background: #ffd97f; display: flex; align-items: center; gap: 10px; padding: 0 0 1px 5px; background-image: linear-gradient(90deg, transparent 215px, #a8a8b8 215px 216px, transparent 216px); }
.tree-doc { width: 18px; height: 22px; flex: none; }
.tree-sel .zh { color: #50463a; }

.editor { flex: 1; padding-top: 1px; }
.textarea { width: 971px; height: 134px; background: #fff; border: 2px solid #454552; }
.dd { background: #fff; border: 1px solid #b8b8c6; border-radius: 2px; display: flex; align-items: center; padding-bottom: 2px; }
.dd-a { width: 190px; height: 29px; margin-top: 3px; padding-left: 5px; gap: 6px; }
.dd-a .zh { letter-spacing: .95px; }
.num { font-size: 16px; color: #000; }
.dd-a .caret { margin-left: 18px; width: 12px; height: 7px; }
.dd .caret { margin-top: 2px; }

.sec-b { margin-top: 9px; height: 204px; }
.secbtn-b { height: 32px; }
.sec-b-main { padding-top: 1px; }
.gridtool { height: 31px; display: flex; gap: 3px; align-items: flex-start; padding: 2px 0 0 35px; background: #cecdea; border-top: 1px solid #dcdbef; }
.gsep { width: 8px; height: 20px; margin-top: 3px; background: linear-gradient(90deg, transparent 3px, #a6a6a8 3px 5px, transparent 5px); flex: none; }
.g9 { width: 9px; }
.gsep.white { background: linear-gradient(90deg, transparent 3px, #f6f6fa 3px 5px, transparent 5px); }

.table { height: 141px; overflow: hidden; margin-left: 2px; background: #fff; }
.tr { display: grid; grid-template-columns: 33px 48px 60px 48px 48px 132px 264px 96px 48px 24px 132px 132px 144px 120px 48px 1fr; height: 26px; }
.thead { height: 30px; }
.c { border-right: 1px solid #c3bfda; border-bottom: 1px solid #c3bfda; padding-left: 3px; line-height: 24px; overflow: hidden; background: #fff; }
.thead .c { line-height: 29px; background: linear-gradient(#dcdce6, #c9c9d6); border-right-color: #aeaec2; border-bottom-color: #aaaabf; }
.thead .lat { color: #111; }
.thead .ibar { font-family: "Liberation Serif", serif; font-weight: bold; padding-left: 6px; font-size: 17px; }
.r { text-align: right; padding-right: 5px; padding-left: 0; }
.r2 { padding-right: 3px; }
.r3 { padding-right: 5px; }
.r4 { padding-right: 11px; }
.c.ro { background: #e0dff4; }
.st-y { background: #ffee9c; box-shadow: inset 0 0 0 2px #e0dff4; }
.c.rh { background: linear-gradient(#c8c8d4, #d3d3dc 40%, #c3c3cf); border: 1px solid #8e8e9e; border-radius: 2px; padding: 0; }
.thead .c.rh { background: linear-gradient(#dcdce6, #c9c9d6); border: 0; border-right: 1px solid #aeaec2; display: flex; align-items: center; justify-content: center; border-radius: 0; }
.hd-ico { width: 18px; height: 15px; }
.hscroll { height: 31px; display: flex; border-top: 2px solid #b8b4dc; background: #cecdea; margin-left: 1px; }
.hs-left { width: 143px; flex: none; }
.hs-btn { width: 23px; height: 26px; margin-top: 3px; margin-right: 3px; flex: none; background: linear-gradient(#e8e8f0, #cacad6); border: 1px solid #a8a8b8; border-radius: 2px; display: flex; align-items: center; justify-content: center; }
.tri-l, .tri-r, .tri-up, .tri-dn { display: block; width: 0; height: 0; border-style: solid; }
.tri-l { border-width: 6px 7px 6px 0; border-color: transparent #555 transparent transparent; }
.tri-r { border-width: 6px 0 6px 7px; border-color: transparent transparent transparent #444; }
.tri-up { border-width: 0 8px 9px 8px; border-color: transparent transparent #000 transparent; }
.tri-dn { border-width: 9px 8px 0 8px; border-color: #000 transparent transparent transparent; }
.hs-thumb { width: 730px; margin: 3px 0 0 2px; flex: none; background: #ecebf8; border: 1px solid #9e9eb0; border-radius: 2px; display: flex; align-items: center; justify-content: center; }
.grip { width: 8px; height: 6px; background: repeating-linear-gradient(90deg, #a8a8b8 0 2px, transparent 2px 3px); }
.hs-rest { flex: 1; background: #f9f9fb; margin-top: -2px; border-top: 2px solid #d4d2ea; }

/* Item detail */
.sec-c { margin-top: 34px; flex: 1; display: flex; flex-direction: column; min-height: 0; }
.item-head { display: flex; align-items: center; height: 33px; padding-left: 1px; }
.secbtn-c { width: 34px; }
.item-label { margin-left: 4px; width: 165px; }
.dd-c { width: 490px; height: 31px; padding: 0 6px 2px; justify-content: space-between; }
.dd-c .lat { font-size: 16px; word-spacing: 3.200px; letter-spacing: .25px; }
.arrbtn { width: 35px; height: 33px; }
.arrbtn.first { margin-left: 39px; margin-right: 1px; }
.tabs-c { margin: 4px 0 0 48px; }
.t1 { width: 123px; --cut: 22px; padding-left: 32px; }
.t2 { width: 118px; }
.t3 { width: 75px; }
.t4 { width: 111px; }
.t5 { width: 93px; }
.t6 { width: 74px; }
.t7 { width: 93px; }
.t8 { width: 75px; padding-left: 14px; }
.t9 { width: 112px; padding-left: 14px; }
.t10 { width: 127px; padding-left: 32px; margin-left: -17px; z-index: 1; }
.t11 { width: 129px; padding-left: 14px; }
.panel-c { margin-left: 37px; height: 169px; padding: 69px 0 0 34px; box-shadow: inset 0 2px 0 #a79fe0, inset 0 3px 0 #8a80c8; }
.form-row { display: flex; align-items: stretch; }
.row1 { height: 30px; }
.row2 { height: 28px; margin-top: 5px; }
.flabel { width: 193px; border-bottom: 1px solid #aeaebd; padding-left: 3px; display: flex; align-items: center; }
.input { font: 24px/28px "Liberation Serif", serif; color: #111; padding-left: 4px; border: 1px solid #b8b8c0; position: relative; }
.focus { width: 130px; background: #fff09c; border-color: #aaa89a; }
.small { width: 81px; background: #fff; }
.cursor { position: absolute; left: 63px; top: 2px; width: 3px; height: 23px; background: #0a2a9e; }
.botscroll { height: 12px; margin: 1px 0 0 -4px; display: flex; align-items: flex-start; position: relative; }
.bs-btn { width: 24px; height: 12px; display: flex; align-items: flex-start; justify-content: center; padding-top: 5px; }
.tri-l.small { border-width: 5px 6px 5px 0; }
.tri-r.small { border-width: 5px 0 5px 6px; }
.bs-thumb { flex: 1; margin-left: 4px; height: 12px; border-top: 1px solid #9b9ba8; border-left: 1px solid #9b9ba8; background: #ecebf8; display: flex; justify-content: center; box-shadow: 0 -1px 0 #fff; }
.bs-thumb .grip { margin: 8px 0 0 78px; height: 3px; }

/* IME bar */
.ime { position: absolute; left: 1620px; top: 118px; width: 114px; height: 36px; background: #fff; border-bottom: 2px solid #dcdce4; }
.ime-s { position: absolute; left: -33px; top: -3px; width: 38px; height: 38px; background: linear-gradient(#ff6a22, #f4500e); border-radius: 4px; transform: rotate(-12deg); font: italic bold 38px/36px "Liberation Sans", sans-serif; color: #fff; text-align: center; }
.ime-zh { position: absolute; left: 18px; top: 2px; font: bold 22px/30px "Noto Sans CJK SC", sans-serif; color: #0a6fdc; }
.ime-punct { position: absolute; left: 56px; top: 1px; font: bold 24px/26px "Noto Sans", sans-serif; color: #0a6fdc; }
.ime-mic { position: absolute; left: 92px; top: 7px; width: 18px; height: 24px; }

/* Watermark */
.wm { position: absolute; inset: 0; pointer-events: none; overflow: hidden; }
.w { position: absolute; font: bold 34px/40px "Liberation Sans", sans-serif; color: rgba(90, 90, 120, .035); letter-spacing: 2px; transform: translate(-50%, -50%) rotate(-36deg); white-space: nowrap; }
.w1 { left: 1294px; top: 150px; }
.w2 { left: 1477px; top: 70px; }
.w3 { left: 1040px; top: 300px; }
.w4 { left: 807px; top: 400px; }
.w5 { left: 1470px; top: 490px; }
.w6 { left: 1690px; top: 365px; }
.w7 { left: 1216px; top: 652px; }
.w8 { left: 851px; top: 851px; }
.w9 { left: 155px; top: 775px; }
.w10 { left: 130px; top: 400px; }
.w11 { left: 1660px; top: 840px; }
.w12 { left: 1440px; top: 920px; }
.w13 { left: 1106px; top: 763px; }
.w14 { left: 387px; top: 210px; }
.w15 { left: 650px; top: 50px; }
.w16 { left: 340px; top: 660px; }

/* Annotations */
.mark { position: absolute; border: 4px solid #f8211c; border-radius: 6px; }
.mark-save { left: 323px; top: 57px; width: 44px; height: 45px; }
.mark-input { left: 481px; top: 840px; width: 175px; height: 55px; }
.br { position: absolute; width: 8px; height: 8px; border: 0 solid #a01818; }
.br-tl { left: 479px; top: 854px; border-width: 2px 0 0 2px; }
.br-tr { left: 611px; top: 854px; border-width: 2px 2px 0 0; }
.br-bl { left: 479px; top: 883px; border-width: 0 0 2px 2px; }
.br-br { left: 611px; top: 883px; border-width: 0 2px 2px 0; }
.arrows { position: absolute; left: 0; top: 0; width: 1734px; height: 968px; pointer-events: none; }
.redtext { position: absolute; font-family: "Noto Sans CJK SC", sans-serif; color: #ff2020; white-space: nowrap; }
.rt2 { left: 469px; top: 122px; font-size: 31px; line-height: 40px; }
.rt1 { left: 789px; top: 877px; font-size: 31px; line-height: 40px; }
.csdn { position: absolute; left: 1537px; top: 938px; font: 17.500px/20px "Liberation Sans", sans-serif; color: #a4a4ac; text-shadow: 1px 1px 0 #fff; white-space: nowrap; }
```
